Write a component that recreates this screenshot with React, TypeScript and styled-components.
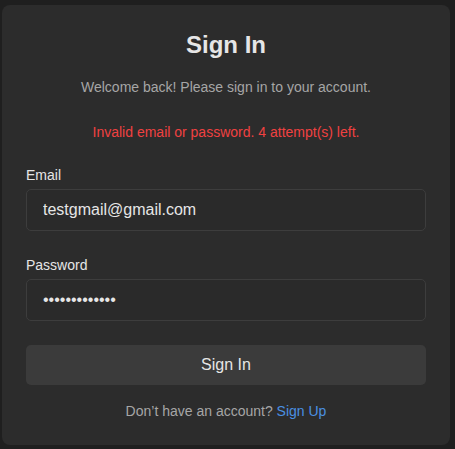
import React from "react";
import styled, { createGlobalStyle } from "styled-components";

const Global = createGlobalStyle`
  html, body {
    margin: 0;
    padding: 0;
    background: #1f1f1f;
    font-family: "Liberation Sans", Arial, sans-serif;
  }
  * { box-sizing: border-box; }
`;

const Page = styled.div`
  padding: 5px 5px 4px 2px;
`;

const Card = styled.div`
  width: 448px;
  background: #2c2c2c;
  border-radius: 8px;
  padding: 26px 24px;
  display: flex;
  flex-direction: column;
`;

const Title = styled.h1`
  margin: 0;
  font-size: 24px;
  line-height: 28px;
  font-weight: 700;
  color: #e6e6e6;
  text-align: center;
`;

const Subtitle = styled.p`
  margin: 20px 0 0;
  font-size: 14px;
  line-height: 16px;
  color: #a6a6a6;
  text-align: center;
`;

const ErrorText = styled.p`
  margin: 29px 0 0;
  font-size: 14px;
  line-height: 16px;
  color: #f04141;
  text-align: center;
`;

const Field = styled.div<{ $gap: number }>`
  display: flex;
  flex-direction: column;
  margin-top: ${(p) => p.$gap}px;
`;

const Label = styled.label`
  font-size: 14px;
  line-height: 16px;
  color: #e6e6e6;
  margin-bottom: 6px;
`;

const Input = styled.input`
  height: 42px;
  width: 100%;
  padding: 0 16px;
  background: #2a2a2a;
  border: 1px solid #3d3d3d;
  border-radius: 5px;
  color: #e6e6e6;
  font-family: "Liberation Sans", Arial, sans-serif;
  font-size: 16px;
  outline: none;
`;

const Button = styled.button`
  margin-top: 24px;
  height: 40px;
  width: 100%;
  border: none;
  border-radius: 5px;
  background: #3b3b3b;
  color: #e6e6e6;
  font-family: "Liberation Sans", Arial, sans-serif;
  font-size: 16px;
  cursor: pointer;
`;

const Footer = styled.p`
  margin: 18px 0 0;
  font-size: 14px;
  line-height: 16px;
  color: #a6a6a6;
  text-align: center;
`;

const Link = styled.a`
  color: #4a90e2;
  text-decoration: none;
`;

export default function App() {
  return (
    <>
      <Global />
      <Page>
        <Card>
          <Title>Sign In</Title>
          <Subtitle>Welcome back! Please sign in to your account.</Subtitle>
          <ErrorText>Invalid email or password. 4 attempt(s) left.</ErrorText>
          <Field $gap={27}>
            <Label htmlFor="email">Email</Label>
            <Input id="email" type="email" defaultValue="testgmail@gmail.com" />
          </Field>
          <Field $gap={26}>
            <Label htmlFor="password">Password</Label>
            <Input id="password" type="password" defaultValue="testpassword1" />
          </Field>
          <Button type="button">Sign In</Button>
          <Footer>
            Don’t have an account? <Link href="#">Sign Up</Link>
          </Footer>
        </Card>
      </Page>
    </>
  );
}
